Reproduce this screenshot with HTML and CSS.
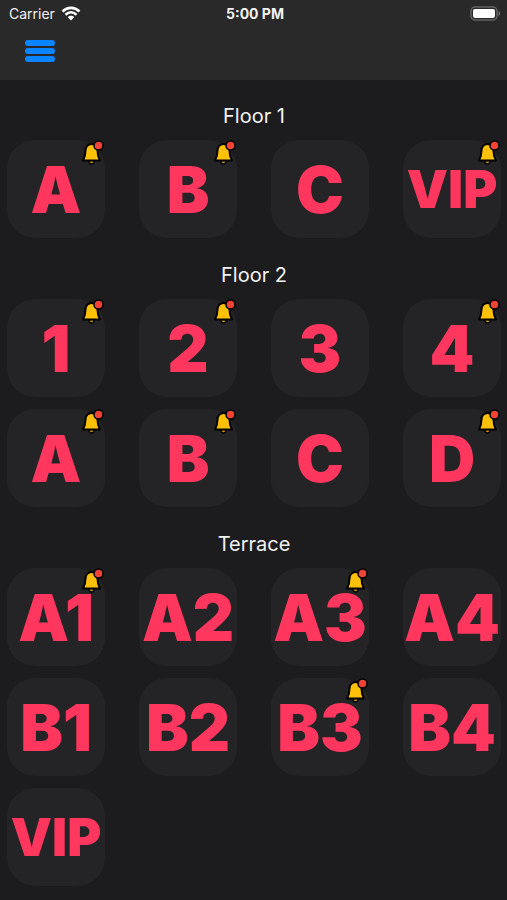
FILE: index.html
```html
<!DOCTYPE html>
<html lang="en">
<head>
  <meta charset="UTF-8">
  <meta name="viewport" content="width=device-width, initial-scale=1.0">
  <title>Tables</title>
  <link rel="stylesheet" href="styles.css">
</head>
<body>
  <!-- shared bell icon -->
  <svg class="defs" width="0" height="0" aria-hidden="true">
    <symbol id="bell" viewBox="0 0 24 26">
      <path d="M8 20.500H13C13 23 12.300 24 10.500 24S8 23 8 20.500Z" fill="#d99400" stroke="#000" stroke-width="1.500"/>
      <path d="M10.500 4C14 4 16.500 7 16.500 10.500C16.500 16 17.500 18 19 20.500H2C3.500 18 4.500 16 4.500 10.500C4.500 7 7 4 10.500 4Z" fill="#ffc107" stroke="#000" stroke-width="2" stroke-linejoin="round"/>
      <circle cx="17.500" cy="5.500" r="4.500" fill="#f44336" stroke="#000" stroke-width="1.500"/>
    </symbol>
  </svg>

  <header>
    <div class="status">
      <div class="carrier">
        <span>Carrier</span>
        <svg width="20" height="15" viewBox="0 0 20 15" fill="none" stroke="#fff" stroke-width="2.600">
          <path d="M1.500 5.500C6.500 .700 13.500 .700 18.500 5.500"/>
          <path d="M4.500 8.700C8 5.600 12 5.600 15.500 8.700"/>
          <path d="M10 14.500L6.700 11.200C8.500 9.400 11.500 9.400 13.300 11.200Z" fill="#fff" stroke="none"/>
        </svg>
      </div>
      <div class="time">5:00 PM</div>
      <svg class="battery" width="31" height="15" viewBox="0 0 31 15">
        <rect x="1" y="1" width="26" height="13" rx="4" fill="none" stroke="#636363" stroke-width="1.500"/>
        <rect x="3" y="3" width="22" height="9" rx="2" fill="#fff"/>
        <path d="M28.500 5C30.700 6 30.700 9 28.500 10Z" fill="#737373"/>
      </svg>
    </div>
    <button class="menu-btn" aria-label="Menu">
      <span></span>
      <span></span>
      <span></span>
    </button>
  </header>

  <main>
    <section>
      <h2>Floor 1</h2>
      <div class="tables">
        <button class="tile">A<svg class="bell"><use href="#bell"/></svg></button>
        <button class="tile">B<svg class="bell"><use href="#bell"/></svg></button>
        <button class="tile">C</button>
        <button class="tile vip">VIP<svg class="bell"><use href="#bell"/></svg></button>
      </div>
    </section>

    <section>
      <h2>Floor 2</h2>
      <div class="tables">
        <button class="tile">1<svg class="bell"><use href="#bell"/></svg></button>
        <button class="tile">2<svg class="bell"><use href="#bell"/></svg></button>
        <button class="tile">3</button>
        <button class="tile">4<svg class="bell"><use href="#bell"/></svg></button>
        <button class="tile">A<svg class="bell"><use href="#bell"/></svg></button>
        <button class="tile">B<svg class="bell"><use href="#bell"/></svg></button>
        <button class="tile">C</button>
        <button class="tile">D<svg class="bell"><use href="#bell"/></svg></button>
      </div>
    </section>

    <section>
      <h2>Terrace</h2>
      <div class="tables">
        <button class="tile">A1<svg class="bell"><use href="#bell"/></svg></button>
        <button class="tile">A2</button>
        <button class="tile">A3<svg class="bell"><use href="#bell"/></svg></button>
        <button class="tile">A4</button>
        <button class="tile">B1</button>
        <button class="tile">B2</button>
        <button class="tile">B3<svg class="bell"><use href="#bell"/></svg></button>
        <button class="tile">B4</button>
        <button class="tile vip">VIP</button>
      </div>
    </section>
  </main>
</body>
</html>
```
FILE: styles.css
```css
* {
  box-sizing: border-box;
  margin: 0;
  padding: 0;
}

body {
  background-color: #1c1c1e;
  color: #f2f2f2;
  font-family: Inter, "Liberation Sans", sans-serif;
}

.defs {
  position: absolute;
}

header {
  background-color: #292929;
  height: 80px;
}

.status {
  display: grid;
  grid-template-columns: 1fr auto 1fr;
  align-items: center;
  height: 27px;
  padding: 0 6px 0 9px;
  font-size: 14px;
}

.carrier {
  display: flex;
  align-items: center;
  gap: 6px;
}

.time {
  font-weight: 700;
}

.battery {
  justify-self: end;
}

.menu-btn {
  display: flex;
  flex-direction: column;
  gap: 2px;
  width: 30px;
  margin: 13px 25px;
  background: none;
  border: none;
  cursor: pointer;
}

.menu-btn span {
  width: 100%;
  height: 6px;
  border-radius: 3px;
  background-color: #0a84ff;
}

main {
  padding: 24px 6px 12px 7px;
}

section + section {
  margin-top: 25px;
}

h2 {
  margin-bottom: 12px;
  font-size: 20px;
  font-weight: 400;
  line-height: 24px;
  text-align: center;
}

.tables {
  display: grid;
  grid-template-columns: repeat(4, 98px);
  justify-content: space-between;
  row-gap: 12px;
}

.tile {
  position: relative;
  display: flex;
  align-items: center;
  justify-content: center;
  height: 98px;
  border: none;
  border-radius: 28px;
  background-color: #242426;
  color: #ff375f;
  font-family: inherit;
  font-size: 64px;
  font-weight: 900;
  cursor: pointer;
}

.tile.vip {
  font-size: 52px;
}

.bell {
  position: absolute;
  top: 0;
  right: 0;
  width: 24px;
  height: 26px;
}
```
